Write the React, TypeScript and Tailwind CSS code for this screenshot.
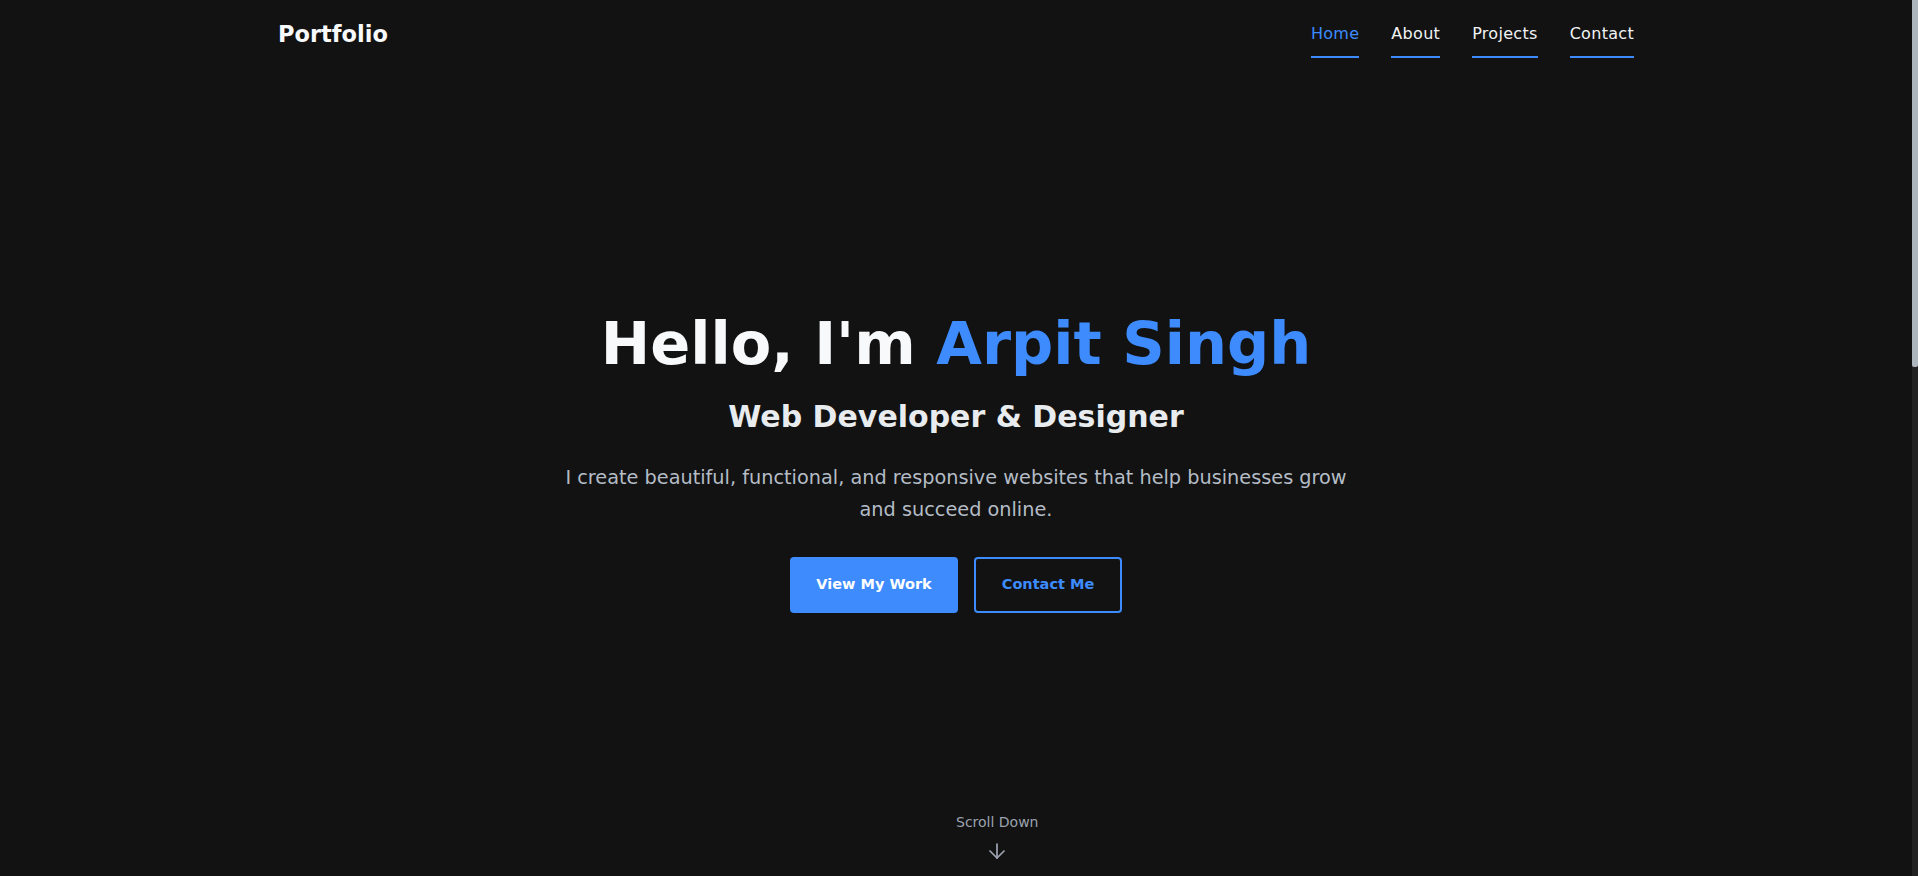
import React from "react";
import { ArrowDown } from "lucide-react";

const App = () => {
  const links = [
    { label: "Home", active: true },
    { label: "About", active: false },
    { label: "Projects", active: false },
    { label: "Contact", active: false },
  ];

  return (
    <div className="flex h-screen w-full overflow-hidden bg-[#121212] font-['DejaVu_Sans',sans-serif]">
      <div className="flex flex-1 flex-col">
        {/* navbar */}
        <header className="mx-auto flex h-[66px] w-full max-w-[1356px] items-start justify-between pt-[18px]">
          <h1 className="text-[22.5px] font-bold leading-8 text-[#f8f9fa]">
            Portfolio
          </h1>
          <nav className="flex gap-8 pt-[4px]">
            {links.map((item, index) => (
              <a
                key={index}
                href="#"
                className={`border-b-2 border-[#3d8bfd] pb-[10px] text-[16px] leading-6 tracking-[0.3px] ${
                  item.active ? "text-[#3d8bfd]" : "text-[#f1f3f5]"
                }`}
              >
                {item.label}
              </a>
            ))}
          </nav>
        </header>

        {/* hero */}
        <section className="flex flex-1 flex-col items-center pt-[243px]">
          <h2 className="text-[59px] font-bold leading-[1.2] text-[#f8f9fa]">
            Hello, I'm <span className="text-[#3d8bfd]">Arpit Singh</span>
          </h2>
          <h3 className="mt-[19px] text-[30px] font-bold leading-[1.2] text-[#e9ecef]">
            Web Developer &amp; Designer
          </h3>
          <p className="mt-[27px] max-w-[800px] text-center text-[19.3px] leading-[32px] text-[#b4bcc6]">
            I create beautiful, functional, and responsive websites that help
            businesses grow and succeed online.
          </p>
          <div className="mt-[31px] flex gap-4">
            <a
              href="#"
              className="flex h-[56px] w-[168px] items-center justify-center rounded bg-[#3d8bfd] text-[14.5px] font-bold text-white"
            >
              View My Work
            </a>
            <a
              href="#"
              className="flex h-[56px] w-[148px] items-center justify-center rounded border-2 border-[#3d8bfd] text-[14.5px] font-bold text-[#3d8bfd]"
            >
              Contact Me
            </a>
          </div>

          {/* scroll hint */}
          <div className="mt-[199px] ml-[50%] flex flex-col items-center self-start">
            <span className="text-[14px] leading-5 text-[#9ca3af]">
              Scroll Down
            </span>
            <ArrowDown size={24} strokeWidth={1.75} className="mt-[7px] text-[#9ca3af]" />
          </div>
        </section>
      </div>

      {/* scrollbar */}
      <div className="flex w-[6px] flex-col bg-[#222222]">
        <div className="h-[367px] rounded-b-[2px] bg-[#adb5bd]" />
      </div>
    </div>
  );
};

export default App;
